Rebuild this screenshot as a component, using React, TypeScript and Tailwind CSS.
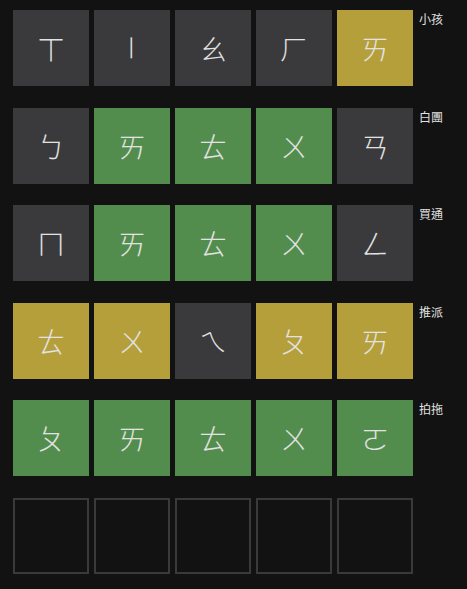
const rows: { letters: string[]; states: string[]; word: string }[] = [
  { letters: ["ㄒ", "ㄧ", "ㄠ", "ㄏ", "ㄞ"], states: ["x", "x", "x", "x", "y"], word: "小孩" },
  { letters: ["ㄅ", "ㄞ", "ㄊ", "ㄨ", "ㄢ"], states: ["x", "g", "g", "g", "x"], word: "白團" },
  { letters: ["ㄇ", "ㄞ", "ㄊ", "ㄨ", "ㄥ"], states: ["x", "g", "g", "g", "x"], word: "買通" },
  { letters: ["ㄊ", "ㄨ", "ㄟ", "ㄆ", "ㄞ"], states: ["y", "y", "x", "y", "y"], word: "推派" },
  { letters: ["ㄆ", "ㄞ", "ㄊ", "ㄨ", "ㄛ"], states: ["g", "g", "g", "g", "g"], word: "拍拖" },
];

const tileColor: Record<string, string> = {
  x: "bg-[#3a3a3c]",
  y: "bg-[#b59f3b]",
  g: "bg-[#538d4e]",
};

function Tile({ letter, state }: { letter: string; state: string }) {
  // ㄧ is drawn upright (vertical form) in the reference
  const upright = letter === "ㄧ";
  return (
    <div
      className={`flex h-[76px] w-[76px] items-center justify-center text-[28px] font-light text-[#e2e2e2] ${tileColor[state]}`}
    >
      <span className={upright ? "inline-block rotate-90" : ""}>{letter}</span>
    </div>
  );
}

export default function App() {
  return (
    <div
      className="flex min-h-[589px] flex-col gap-[21.6px] bg-[#121212] pl-[13px] pt-[10px]"
      style={{ fontFamily: '"Noto Sans CJK TC", "Noto Sans CJK SC", sans-serif' }}
    >
      {rows.map((row, i) => (
        <div key={i} className="flex">
          <div className="flex gap-[5px]">
            {row.letters.map((l, j) => (
              <Tile key={j} letter={l} state={row.states[j]} />
            ))}
          </div>
          <span className="ml-[6px] text-[12px] leading-[18px] text-[#e0e0e0]">{row.word}</span>
        </div>
      ))}

      {/* next guess */}
      <div className="flex gap-[5px]">
        {[0, 1, 2, 3, 4].map((k) => (
          <div key={k} className="h-[76px] w-[76px] border-2 border-[#3a3a3c]" />
        ))}
      </div>
    </div>
  );
}
